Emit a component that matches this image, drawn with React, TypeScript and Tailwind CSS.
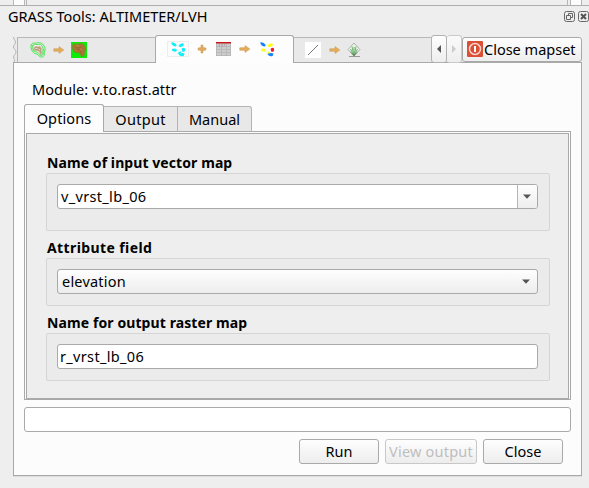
import React from "react";

function Arrow() {
  return (
    <svg width="12" height="10" viewBox="0 0 12 10" className="shrink-0">
      <path d="M.8 3.800h5.200V1.600L10.800 5 6 8.400V6.200H.8z" fill="#e5ac55" stroke="#d3a465" strokeWidth=".7" />
    </svg>
  );
}

function ContourIcon() {
  return (
    <svg width="16" height="16" viewBox="0 0 16 16" className="shrink-0" fill="none">
      <path d="M1 4C1 1 4 .8 6 1.200 9 0 13 1 14 4c2 3 1 4 0 7 1 3-1 4.500-3 4-2 0-2-2-4-3C3 12 .5 7 1 4z" stroke="#43e850" />
      <path d="M2.500 4.500c0-2 3-2.500 4.500-2 3-1 5 .5 5.500 2.500 1.500 3 .5 4 0 5 1 2 0 3.500-1 3.500-2 0-2-2-4-3-3-1-5-3-5-6z" stroke="#5de45c" />
      <path d="M1 6c2 0 2 3 4 4M10 12c0 2 3 1 4-2M1 3l3 1M12 8h3" stroke="#62dc60" strokeWidth=".9" />
      <path d="M4 6l1.500-1.500L8 5l2-.5 1.500 2L11 8l.7 3-1.200 1-1-2.500L7 8.500l-2-.2z" fill="#bf9d78" stroke="#c4a98a" strokeWidth=".6" />
      <path d="M5.500 6.500h2M8.500 7l1.500 1" stroke="#e9e2d4" />
    </svg>
  );
}

function RasterIcon() {
  return (
    <svg width="16" height="16" viewBox="0 0 16 16" className="shrink-0">
      <path fill="#0cec09" d="M0 0h16v16H0z" />
      <path d="M1 4c0-2 2-3 5-2 3-2 7-1 8 2 2 3 1 5 0 6 0 3-1 5-3 5-2 0-1-3-3-4-4 1-7-2-7-7z" fill="#70981f" />
      <path d="M1.500 5c0-2 2-3 4.500-2 3-2 6-1 7 1 2 3 1 5 0 6 0 3-1 4-2 4-2 0-1-3-3-4-3 1-6.500-1-6.500-5z" fill="#a97536" />
      <path d="M4 5l4 1 3-1M5 8l2-1 3 2v3" stroke="#96662f" fill="none" strokeWidth=".8" />
      <path d="M5 4h3M9 7l2 1M4 8l2 1" stroke="#c98545" />
    </svg>
  );
}

function VectorIcon({ colored = false }: { colored?: boolean }) {
  const c = colored
    ? ["#1680ff", "#ffff00", "#ffff19", "#f51820", "#ffff00", "#1680ff"]
    : ["#12eef5", "#12eef5", "#12eef5", "#12eef5", "#12eef5", "#12eef5"];
  return (
    <svg width="22" height="16" viewBox="0 0 22 16" className="shrink-0">
      {!colored && <path d="M.5.500h21v15H.5z" fill="#fcfcfc" stroke="#ededed" />}
      <path d="M4.200 1.500q3-1 5.500 2.500l-.7 1.500Q5 5.500 4.200 1.500z" fill={c[0]} />
      <path d="M11.500 5q1-2.600 4-2.800l1.500.8-1 2.200-3 1z" fill={c[1]} />
      <path d="M5 8.300q2-2 5 .5l-.7 1.700q-3 .6-4.300-1z" fill={c[2]} />
      <path d="M14.500 8q2-2 3.500-.5v2.800l-2.500.6z" fill={c[3]} />
      <path d="M10.500 12l3-1.700.8 1-2 2.300z" fill={c[4]} />
      <path d="M11.500 13.300q3-2 6-.7l-.8 2.400q-3.500 1-5.200-1.700z" fill={c[5]} />
    </svg>
  );
}

function PlusIcon() {
  return (
    <svg width="10" height="10" viewBox="0 0 10 10" className="shrink-0">
      <path d="M4 1h2v2.500L9 4v2l-3 .5V9H4V6.500L1 6V4l3-.5z" fill="#dfa95d" stroke="#d3a669" strokeWidth=".6" />
    </svg>
  );
}

function TableIcon() {
  return (
    <svg width="15" height="14" viewBox="0 0 15 14" className="shrink-0">
      <path fill="#cccccc" d="M0 0h15v14H0z" />
      <path fill="#c9141a" d="M0 0h15v1.500H0z" />
      <path d="M0 4.500h15M0 7.500h15M0 10.500h15M0 13.500h15M.5 2v12M5.500 2v12M10.500 2v12M14.500 2v12" stroke="#b4b4b4" strokeWidth=".8" />
      <path d="M3.500 2v3M6.500 2v3M8.500 2v2" stroke="#999" strokeWidth=".6" />
    </svg>
  );
}

function GrassIcon() {
  return (
    <svg width="14" height="16" viewBox="0 0 14 16" className="shrink-0" fill="none">
      <path d="M7 1l6 6.500L7 14 1 7.500z" fill="#edf2ec" stroke="#a9b5a8" />
      <path d="M3 9.500L7 14l4-4.500-4 3z" fill="#3d5141" />
      <path d="M6.500 13L3.500 7M6.500 12L5 4.500M7 12V5M7.500 12L9 4.500M7.500 13l3-6" stroke="#5cac60" strokeWidth=".9" />
      <path d="M2 14.500h11" stroke="#999" />
    </svg>
  );
}

function Chevron({ dim = false, left = false }: { dim?: boolean; left?: boolean }) {
  return (
    <svg width="4" height="8" viewBox="0 0 4 8">
      <path d={left ? "M4 0v8L0 4z" : "M0 0v8l4-4z"} fill={dim ? "#cccccc" : "#555555"} />
    </svg>
  );
}

function Down() {
  return (
    <svg width="8" height="5" viewBox="0 0 8 5">
      <path d="M0 .5h8L4 4.800z" fill="#555" />
    </svg>
  );
}

function Group({ title, tracking, children, tall = false }: { title: string; tracking: string; children: React.ReactNode; tall?: boolean }) {
  return (
    <section>
      <h2 className={`flex h-[20px] items-center whitespace-pre pl-px text-[14px] font-bold ${tracking}`}>{title}</h2>
      <div className={`rounded-[2px] border border-[#d5d5d5] bg-[#ebebeb] px-[10px] pt-[10px] ${tall ? "h-[58px]" : "h-[48px]"}`}>{children}</div>
    </section>
  );
}

const field = "flex h-[25px] w-[481px] items-center rounded-[3px] border border-[#a9a9a9]";
const button = "flex h-[25px] items-center justify-center rounded-[3px] border bg-linear-to-b from-[#fefefe] to-[#ededed] pb-[2px]";

export default function App() {
  return (
    <div className="h-[488px] w-[589px] overflow-hidden bg-[#eeeeee] font-['Noto_Sans','Open_Sans',sans-serif] text-[14.5px] leading-[20px] text-black">
      <div className="flex h-[6px] justify-between border-b border-[#aeaeae] pl-[13px] pr-[7px]">
        <div className="flex">
          <div className="w-[12px] border-x border-[#b5b5b5] bg-[#fcfcfc]" />
          <div className="w-[2px] border-r border-[#b5b5b5]" />
        </div>
        <div className="flex">
          <div className="w-[3px] border-l border-[#b5b5b5]" />
          <div className="w-[12px] border-x border-[#b5b5b5] bg-[#fcfcfc]" />
        </div>
      </div>
      <header className="flex h-[29px] justify-between pl-[8px]">
        <h1 className="whitespace-pre">GRASS Tools: ALTIMETER/LVH</h1>
        <div className="flex gap-[3px] pt-[5px]">
          <svg width="11" height="11" viewBox="0 0 11 11" fill="none" stroke="#686868">
            <rect x=".5" y=".5" width="10" height="10" rx="2" />
            <path d="M4.500 4V2.500h4v4H7M2.500 4.500h4v4h-4z" />
          </svg>
          <svg width="11" height="11" viewBox="0 0 11 11" fill="none" stroke="#686868">
            <rect x=".5" y=".5" width="10" height="10" rx="2" />
            <path d="M3 3l5 5M8 3L3 8" stroke="#555" strokeWidth="2" />
          </svg>
        </div>
      </header>

      <nav className="relative z-10 flex h-[27px] items-end pl-[13px]">
        <svg width="5" height="25" viewBox="0 0 5 25" className="shrink-0">
          <path d="M1 0c0 3 2 3 2 5S.5 8 .5 10 3 13 3 15 1 18 1 20s2 2 0 5h4V0z" fill="#e9e9e9" />
          <path d="M.5 0c0 3 2 3 2 5S.5 8 .5 10s2.500 3 2.500 5-2.500 3-2.500 5 2 2 .5 5M4.500 0v25" fill="none" stroke="#b5b5b5" />
        </svg>
        <div className="flex h-[25px] w-[137px] items-center border-t border-[#b8b8b8] bg-[#e9e9e9] pl-[12px]">
          <ContourIcon /><span className="w-[7px]" /><Arrow /><span className="w-[6px]" /><RasterIcon />
        </div>
        <div className="mb-[-1px] flex h-[28px] w-[139px] items-center rounded-t-[3px] border border-b-0 border-[#a9a9a9] bg-[#fdfdfd] pb-px pl-[11px]">
          <VectorIcon /><span className="w-[8px]" /><PlusIcon /><span className="w-[9px]" /><TableIcon /><span className="w-[8px]" /><Arrow /><span className="w-[5px]" /><VectorIcon colored />
        </div>
        <div className="flex h-[25px] w-[137px] items-center border-t border-[#b8b8b8] bg-[#e9e9e9] pl-[11px]">
          <svg width="16" height="16" className="shrink-0"><path fill="#fff" d="M0 0h16v16H0z" /><path d="M3 13L13 3" stroke="#777" /></svg>
          <span className="w-[8px]" /><Arrow /><span className="w-[6px]" /><GrassIcon />
        </div>
        <div className="mb-[-1px] flex h-[28px] w-[16px] items-center justify-center rounded-[3px] border border-[#b1b1b1] bg-linear-to-b from-[#fefefe] to-[#eeeeee]"><Chevron left /></div>
        <div className="mb-[-1px] flex h-[28px] w-[15px] items-center justify-center rounded-[3px] border border-l-0 border-[#cacaca] bg-linear-to-b from-[#fafafa] to-[#eeeeee]"><Chevron dim /></div>
        <button className="flex h-[25px] w-[120px] items-center rounded-[3px] border border-[#a9a9a9] bg-linear-to-b from-[#fefefe] to-[#eeeeee] pl-[4px]">
          <svg width="16" height="16" viewBox="0 0 16 16" className="mb-px shrink-0">
            <rect width="16" height="16" rx="1" fill="#da4f35" />
            <circle cx="8" cy="8" r="5.500" fill="none" stroke="#f8d3c9" strokeWidth="1.500" />
            <path d="M8 5v6" stroke="white" strokeWidth="2" />
          </svg>
          <span className="whitespace-pre pb-[2px] pl-px">Close mapset</span>
        </button>
      </nav>

      <main className="ml-[13px] h-[414px] w-[569px] border border-[#a9a9a9] bg-[#fcfcfc] pl-[10px] pt-[16px] shadow-[0_1px_0_#dddddd]">
        <p className="h-[25px] whitespace-pre pl-[8px] tracking-[0.1px]">Module: v.to.rast.attr</p>
        <div className="relative z-10 mb-[-1px] flex h-[28px] items-end">
          <div className="flex h-[28px] w-[80px] items-center justify-center rounded-t-[3px] border border-b-0 border-[#a9a9a9] bg-[#fcfcfc] pb-[2px] tracking-[0.1px]"><span>Options</span></div>
          <div className="flex h-[26px] w-[74px] items-center justify-center border border-l-0 border-[#b4b4b4] border-b-[#a9a9a9] bg-[#e8e8e8] pb-px tracking-[0.3px]"><span>Output</span></div>
          <div className="flex h-[26px] w-[74px] items-center justify-center rounded-tr-[3px] border border-l-0 border-[#b4b4b4] border-b-[#a9a9a9] bg-[#e8e8e8] pb-px"><span>Manual</span></div>
        </div>
        <div className="h-[269px] w-[547px] border border-[#a9a9a9] bg-[#fcfcfc] p-px pb-0">
          <div className="flex h-[266px] flex-col border border-[#a9a9a9] bg-[#eeeeee] pl-[19px] pt-[19px]">
            <div className="flex w-[504px] flex-col gap-[7px]">
              <Group title="Name of input vector map" tracking="tracking-[0.08px]" tall>
                <div className={`${field} bg-white pl-[3px]`}>
                  <span className="flex-1 whitespace-pre pb-[2px] tracking-[0.33px]">v_vrst_lb_06</span>
                  <div className="flex h-full w-[20px] items-center justify-center rounded-r-[2px] border-l border-[#b5b5b5] bg-linear-to-b from-[#fefefe] to-[#eeeeee] pr-[2px]"><Down /></div>
                </div>
              </Group>
              <Group title="Attribute field" tracking="tracking-[0.4px]">
                <div className={`${field} justify-between bg-linear-to-b from-[#fefefe] to-[#ededed] pl-[4px] pr-[7px]`}><span className="pb-[2px] tracking-[0.2px]">elevation</span><Down /></div>
              </Group>
              <Group title="Name for output raster map" tracking="tracking-[0.1px]">
                <div className={`${field} bg-white pl-[2px]`}><span className="whitespace-pre pb-[2px] tracking-[0.33px]">r_vrst_lb_06</span></div>
              </Group>
            </div>
          </div>
        </div>
        <div className="mt-[7px] h-[25px] w-[547px] rounded-[3px] border border-[#a9a9a9] bg-white" />
        <footer className="mt-[7px] flex gap-[6px] pl-[275px]">
          <button className={`${button} w-[80px] border-[#a9a9a9]`}><span>Run</span></button>
          <button disabled className={`${button} w-[92px] border-[#c8c8c8] text-[#bebebe]`}><span className="whitespace-pre tracking-[0.2px]">View output</span></button>
          <button className={`${button} w-[80px] border-[#a9a9a9]`}><span>Close</span></button>
        </footer>
      </main>
    </div>
  );
}
